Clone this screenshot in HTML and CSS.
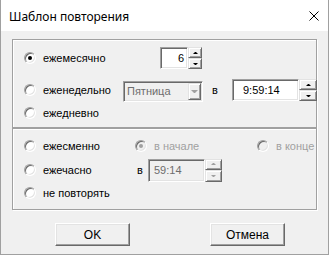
FILE: index.html
```html
<!DOCTYPE html>
<html lang="ru">
<head>
<meta charset="utf-8">
<title>Шаблон повторения</title>
<link rel="stylesheet" href="styles.css">
</head>
<body>
<div class="window">
  <div class="titlebar">
    <span class="title">Шаблон повторения</span>
    <svg class="close" width="10" height="10" viewBox="0 0 10 10"><path d="M0.5 0.5L9.5 9.5M9.5 0.5L0.5 9.5" stroke="#000" stroke-width="1" fill="none"/></svg>
  </div>
  <div class="client">
    <div class="group g1">
      <div class="row r1">
        <div class="choice w136"><span class="radio checked"></span><span class="lbl">ежемесячно</span></div>
        <div class="spin">
          <div class="field f-month">6</div>
          <div class="arrows a14"><span class="ab up"></span><span class="ab down"></span></div>
        </div>
      </div>
      <div class="row r2">
        <div class="choice w99"><span class="radio"></span><span class="lbl">еженедельно</span></div>
        <div class="combo"><span class="combo-text">Пятница</span><span class="dd"></span></div>
        <span class="at at-wide">в</span>
        <div class="spin">
          <div class="field f-time">9:59:14</div>
          <div class="arrows a18"><span class="ab up"></span><span class="ab down"></span></div>
        </div>
      </div>
      <div class="row r3">
        <div class="choice"><span class="radio"></span><span class="lbl">ежедневно</span></div>
      </div>
    </div>
    <div class="group g2">
      <div class="row r1">
        <div class="choice w111"><span class="radio"></span><span class="lbl">ежесменно</span></div>
        <div class="choice w122 dis"><span class="radio checked"></span><span class="lbl">в начале</span></div>
        <div class="choice dis"><span class="radio"></span><span class="lbl">в конце</span></div>
      </div>
      <div class="row r2">
        <div class="choice w113"><span class="radio"></span><span class="lbl">ежечасно</span></div>
        <span class="at at-narrow">в</span>
        <div class="spin dis">
          <div class="field f-min">59:14</div>
          <div class="arrows a17"><span class="ab up"></span><span class="ab down"></span></div>
        </div>
      </div>
      <div class="row r3">
        <div class="choice"><span class="radio"></span><span class="lbl">не повторять</span></div>
      </div>
    </div>
    <div class="buttons">
      <button class="btn">OK</button>
      <button class="btn">Отмена</button>
    </div>
  </div>
</div>
</body>
</html>
```

FILE: styles.css
```css
html, body {
  margin: 0;
  padding: 0;
  background: #ffffff;
}

.window {
  width: 329px;
  height: 255px;
  box-sizing: border-box;
  border: 1px solid #a0a0a0;
  border-top: 0;
  background: #f0f0f0;
  display: flex;
  flex-direction: column;
  font-family: "Liberation Sans", Arial, sans-serif;
  font-size: 11px;
  color: #000;
  overflow: hidden;
}

.titlebar {
  flex: none;
  height: 31px;
  box-sizing: border-box;
  background: #ffffff;
  display: flex;
  align-items: center;
  justify-content: space-between;
  padding: 2px 9px 0 8px;
  font-family: "Noto Sans", "Open Sans", sans-serif;
  font-size: 12px;
  color: #000;
}

.close {
  display: block;
  margin-top: -1px;
}

.client {
  flex: 1;
  padding: 8px 11px 0 11px;
  display: flex;
  flex-direction: column;
}

.group {
  border: 1px solid #a0a0a0;
  box-shadow: inset 1px 1px 0 #ffffff, 1px 1px 0 #ffffff;
}

.g1 {
  height: 87px;
  box-sizing: content-box;
  padding: 7px 0 0 11px;
  box-sizing: border-box;
  height: 89px;
}

.g2 {
  padding: 6px 0 6px 11px;
}

.row {
  display: flex;
  align-items: center;
  height: 22px;
}

.g1 .r2 { margin-top: 10px; }
.g1 .r3 { height: 24px; }
.g2 .r2 { margin-top: 1px; height: 24px; }
.g2 .r3 { height: 21px; }

.choice {
  display: flex;
  align-items: center;
  flex: none;
}

.w136 { width: 136px; }
.w99 { width: 99px; }
.w111 { width: 111px; }
.w122 { width: 122px; }
.w113 { width: 113px; }

.lbl {
  margin-left: 7px;
  white-space: nowrap;
}

.radio {
  flex: none;
  position: relative;
  width: 12px;
  height: 12px;
  box-sizing: border-box;
  border-radius: 50%;
  border: 1px solid;
  border-color: #a0a0a0 #ffffff #ffffff #a0a0a0;
  background: #ffffff;
  box-shadow: inset 1px 1px 0 #696969, inset -1px -1px 0 #e3e3e3;
}

.radio.checked::after {
  content: "";
  position: absolute;
  left: 3px;
  top: 3px;
  width: 4px;
  height: 4px;
  border-radius: 50%;
  background: #000;
}

.dis .radio {
  background: #f0f0f0;
}

.dis .radio.checked::after {
  background: #a0a0a0;
}

.dis .lbl {
  color: #a0a0a0;
}

.at {
  flex: none;
  box-sizing: border-box;
}

.at-wide {
  width: 29px;
  padding-left: 9px;
}

.at-narrow {
  width: 11px;
}

.spin {
  display: flex;
  flex: none;
}

.field {
  box-sizing: border-box;
  height: 22px;
  border: 1px solid;
  border-color: #a0a0a0 #ffffff #ffffff #a0a0a0;
  box-shadow: inset 1px 1px 0 #696969, inset -1px -1px 0 #e3e3e3;
  background: #ffffff;
  line-height: 20px;
  white-space: nowrap;
}

.f-month {
  width: 28px;
  text-align: right;
  padding-right: 3px;
}

.f-time {
  width: 67px;
  padding-left: 10px;
}

.f-min {
  width: 57px;
  height: 23px;
  line-height: 21px;
  padding-left: 5px;
}

.spin.dis .field {
  background: #f0f0f0;
  color: #6d6d6d;
}

.arrows {
  display: flex;
  flex-direction: column;
  height: 22px;
}

.a14 { width: 14px; }
.a18 { width: 18px; }
.a17 { width: 17px; height: 23px; }

.ab {
  flex: 1;
  box-sizing: border-box;
  border: 1px solid;
  border-color: #e3e3e3 #696969 #696969 #e3e3e3;
  box-shadow: inset 1px 1px 0 #ffffff, inset -1px -1px 0 #a0a0a0;
  background: #f0f0f0;
  display: flex;
  align-items: center;
  justify-content: center;
}

.ab.up::after {
  content: "";
  width: 1px;
  height: 0;
  border-left: 2px solid transparent;
  border-right: 2px solid transparent;
  border-bottom: 2px solid #000;
}

.ab.down::after {
  content: "";
  width: 1px;
  height: 0;
  border-left: 2px solid transparent;
  border-right: 2px solid transparent;
  border-top: 2px solid #000;
}

.spin.dis .ab.up::after { border-bottom-color: #a0a0a0; }
.spin.dis .ab.down::after { border-top-color: #a0a0a0; }

.combo {
  flex: none;
  align-self: flex-start;
  margin-top: 2px;
  width: 80px;
  height: 21px;
  box-sizing: border-box;
  border: 1px solid;
  border-color: #a0a0a0 #ffffff #ffffff #a0a0a0;
  box-shadow: inset 1px 1px 0 #696969, inset -1px -1px 0 #e3e3e3;
  background: #f0f0f0;
  padding: 1px;
  display: flex;
}

.combo-text {
  flex: 1;
  padding-left: 2px;
  color: #6d6d6d;
  line-height: 17px;
  white-space: nowrap;
  overflow: hidden;
}

.dd {
  flex: none;
  width: 13px;
  box-sizing: border-box;
  border: 1px solid;
  border-color: #e3e3e3 #696969 #696969 #e3e3e3;
  box-shadow: inset 1px 1px 0 #ffffff, inset -1px -1px 0 #a0a0a0;
  background: #f0f0f0;
  display: flex;
  align-items: center;
  justify-content: center;
}

.dd::after {
  content: "";
  width: 1px;
  height: 0;
  border-left: 3px solid transparent;
  border-right: 3px solid transparent;
  border-top: 3px solid #a0a0a0;
}

.buttons {
  display: flex;
  gap: 80px;
  margin-top: 13px;
  padding-left: 43px;
}

.btn {
  width: 75px;
  height: 23px;
  box-sizing: border-box;
  margin: 0;
  padding: 0;
  border: 1px solid;
  border-color: #ffffff #696969 #696969 #ffffff;
  box-shadow: inset -1px -1px 0 #a0a0a0, inset 1px 1px 0 #e3e3e3;
  background: #f0f0f0;
  font-family: "Liberation Sans", Arial, sans-serif;
  font-size: 12px;
  color: #000;
}
```
